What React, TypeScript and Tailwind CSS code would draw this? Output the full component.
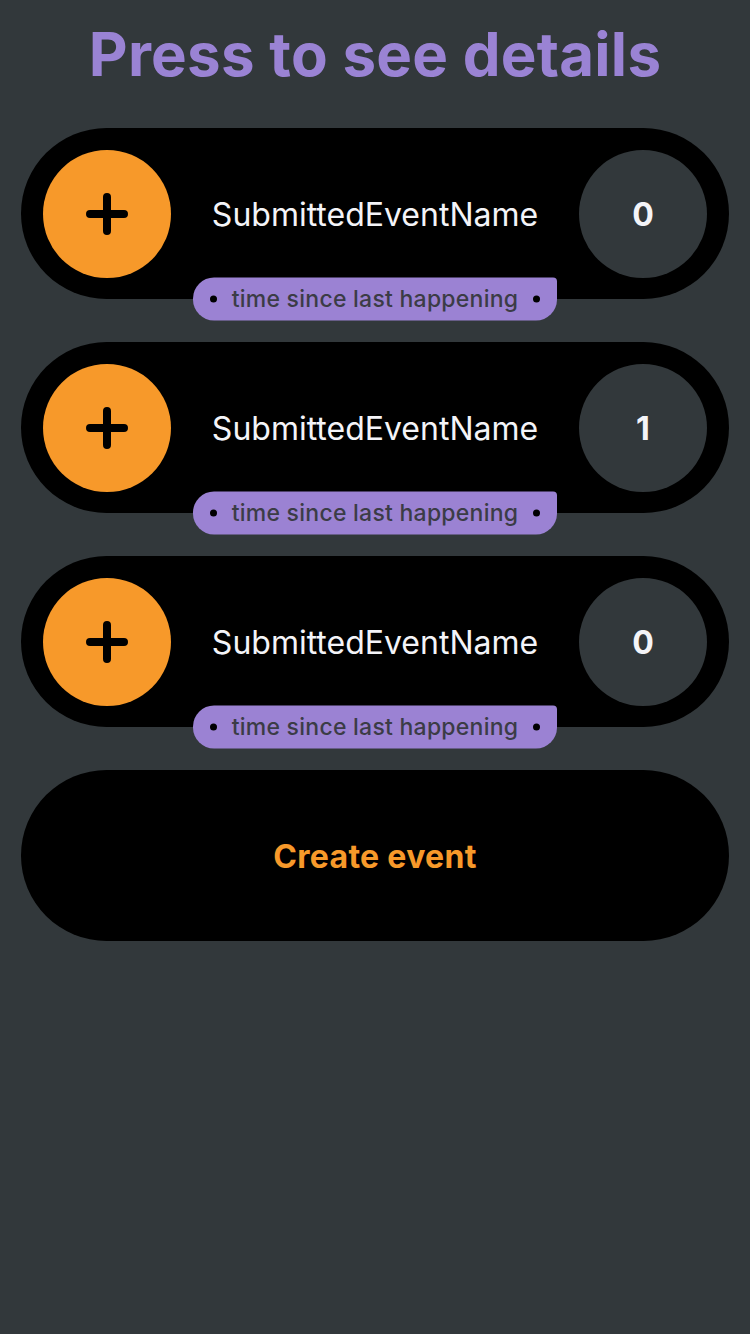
import React from "react";

const events = [
  { name: "SubmittedEventName", count: 0 },
  { name: "SubmittedEventName", count: 1 },
  { name: "SubmittedEventName", count: 0 },
];

const PlusIcon = () => (
  <svg width="42" height="42" viewBox="0 0 42 42">
    <path d="M21 4v34M4 21h34" stroke="#000" strokeWidth="8" strokeLinecap="round" />
  </svg>
);

const EventCard = ({ name, count }: { name: string; count: number }) => {
  return (
    <div className="relative mx-[21px] flex h-[171px] items-center rounded-full bg-black px-[22px]">
      <button className="flex h-[128px] w-[128px] shrink-0 items-center justify-center rounded-full bg-[#f7992a]">
        <PlusIcon />
      </button>
      <div className="flex-1 pt-[2px] text-center text-[32px] text-[#f4f4f8]">{name}</div>
      <div className="flex h-[128px] w-[128px] shrink-0 items-center justify-center rounded-full bg-[#32383b] pt-[2px] text-[32px] font-bold text-[#f4f4f8]">
        {count}
      </div>
      <div className="absolute bottom-0 left-1/2 flex h-[43px] w-[364px] -translate-x-1/2 translate-y-1/2 items-center justify-between rounded-l-[21px] rounded-tr-[4px] rounded-br-[21px] bg-[#9b82d3] px-[17px] text-[23px] font-medium tracking-[0.25px] text-[#3b3c46]">
        <span className="h-[7px] w-[7px] rounded-full bg-black" />
        <span className="leading-none">time since last happening</span>
        <span className="h-[7px] w-[7px] rounded-full bg-black" />
      </div>
    </div>
  );
};

export default function App() {
  return (
    <div
      className="min-h-[1334px] w-[750px] bg-[#32383b] pt-6"
      style={{ fontFamily: "Inter, 'Noto Sans', sans-serif" }}
    >
      <h1 className="mb-[44px] text-center text-[60px] font-bold leading-none tracking-[0.25px] text-[#9a83d4]">
        Press to see details
      </h1>
      <div className="flex flex-col gap-[43px]">
        {events.map((e, i) => (
          <EventCard key={i} name={e.name} count={e.count} />
        ))}
        <button className="mx-[21px] flex h-[171px] items-center justify-center rounded-full bg-black pt-[2px] text-[32px] font-bold tracking-[0.3px] text-[#f7992a]">
          Create event
        </button>
      </div>
    </div>
  );
}
